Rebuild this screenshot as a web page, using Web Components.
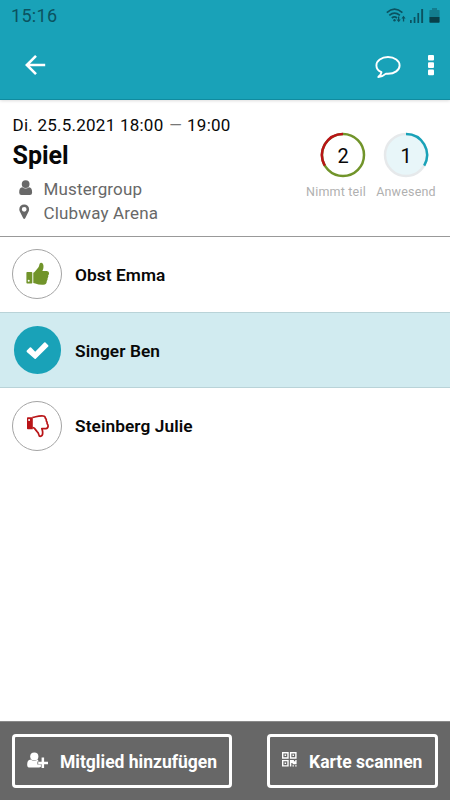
<!DOCTYPE html>
<html lang="de">
<head>
<meta charset="utf-8">
<title>Spiel</title>
<style>
html,body{margin:0;height:100%;background:#fff;overflow:hidden}
body{font-family:Roboto,"Noto Sans",sans-serif;color:#080808}
</style>
</head>
<body>
<club-app></club-app>
<script>
const ICONS = {
  wifi: [20,16,'<g fill="none" stroke="currentColor" stroke-width="1.7"><path d="M.8 4.6Q8.5-2.2 16.4 4.6"/><path d="M3.3 7.4Q8.5 2.9 13.9 7.4"/><path d="M5.8 10Q8.4 7.8 11 10"/></g><circle cx="8.5" cy="12.2" r="1.2" fill="currentColor"/><path d="M12 8.600h1.300v3h1.500l-2.100 2.600-2.200-2.600h1.500zM16.900 13.600h1.300v-3.200h1.400l-2.100-2.600-2.100 2.600h1.500z" fill="currentColor"/>'],
  signal: [14,15,'<g fill="currentColor"><rect x="0" y="11" width="1.700" height="3"/><rect x="3.700" y="8" width="1.700" height="6"/><rect x="7.400" y="4" width="1.700" height="10"/><rect x="11.200" y="0" width="1.900" height="14"/></g>'],
  battery: [11,16,'<path d="M3 0h5v2h2q.6 0 .6.7V9H.4V2.700Q.4 2 1 2h2z" fill="#137d8f"/><path d="M.4 9h10.200v5q0 .8-.8.8H1.200Q.4 14.800.4 14z" fill="#083f49"/>'],
  back: [22,22,'<path d="M11 1.800L1.800 11l9.200 9.200M1.800 11h18.400" fill="none" stroke="#fff" stroke-width="2.600"/>'],
  comment: [26,24,'<path d="M6.500 17.200C3 15.700 1.400 13.200 1.400 10.400 1.400 5.600 6.500 2 13 2s11.600 3.600 11.600 8.400S19.500 18.700 13 18.700q-1 0-2-.1Q7.500 21.800 3.300 22q2.900-2.100 3.200-4.800z" fill="none" stroke="#fff" stroke-width="1.900" stroke-linejoin="round"/>'],
  more: [6,21,'<g fill="#fff"><rect width="6" height="5.600" rx="1"/><rect y="7.300" width="6" height="5.600" rx="1"/><rect y="14.600" width="6" height="5.600" rx="1"/></g>'],
  user: [14,16,'<path d="M3.300 7.200Q0 7.500.2 12.700.3 15.100 2.400 15.100h8.500q2.100 0 2.200-2.400.2-5.200-3.100-5.500Q6.700 9.700 3.300 7.200z" fill="currentColor"/><circle cx="6.650" cy="4.100" r="3.900" fill="currentColor"/>'],
  pin: [14,16,'<path fill-rule="evenodd" d="M5.200.4a4.900 4.900 0 0 1 4.900 4.900q0 1.100-.4 2L6.200 14.300q-1 1.200-2 0L.7 7.300q-.4-.9-.4-2A4.900 4.900 0 0 1 5.200.4zm0 2.500a2.400 2.400 0 1 0 0 4.800 2.400 2.400 0 0 0 0-4.800z" fill="currentColor"/>'],
  up: [24,24,'<path fill="#71942a" fill-rule="evenodd" d="M1.200 10h4.300q.8 0 .8.800v10q0 .8-.8.800H1.200q-.8 0-.8-.8v-10q0-.8.800-.8zm1.500 7.800a1 1 0 1 0 0 2 1 1 0 0 0 0-2zM7.300 10.800q1-.2 1.900-1.500l3.100-3.900q.8-1 1.100-2.900.3-1.800 1.600-1.800 2.700.2 2.500 4.300 0 1.500-1.100 4h4.500q2.200.2 2.200 2.300 0 1.400-.9 2 .5 1.700-.6 2.900.2 1.700-.8 2.700.1 3.700-3.500 3.800-4.600.2-8-1.200-1.200-.4-2-.4z"/>'],
  down: [24,24,'<path fill="#b91417" fill-rule="evenodd" d="M1.800 3.300h5v12h-5q-.8 0-.8-.8v-10.400q0-.8.800-.8zm1.300 1.600a1 1 0 1 0 0 2 1 1 0 0 0 0-2z"/><path d="M6.500 3.400C10 3 11.500 1.700 17.200 2q2.200.2 2.200 2.300 1.300.9.900 2.600 1.200 1.200.8 2.800 1 1 1 2.400-.1 2.300-2.300 2.500h-4q.9 2 .9 4.500 0 3.200-2.500 3.300-1.100 0-1.400-1.800-.3-1.700-1.700-3l-2.600-3.200q-.8-.9-2-.9" fill="none" stroke="#b91417" stroke-width="1.700" stroke-linejoin="round"/>'],
  check: [24,20,'<path d="M.8 10.600l3-3q.7-.6 1.300 0L9.200 11.700 18.200 2.600q.7-.6 1.300 0l2.700 2.700q.6.700 0 1.300L9.800 18.800q-.6.600-1.200 0L.8 11.900q-.5-.7 0-1.300z" fill="#fff"/>'],
  add: [22,17,'<g fill="#fff"><circle cx="7.300" cy="4.500" r="4.100"/><path d="M3.500 7.600Q.1 7.900.2 12.900.3 15.600 2.700 15.600h9.200q1.300 0 2-.8v-2.300h-3.500V9.400h1.200Q11 7.700 10.700 7.600 7.200 10.200 3.500 7.600z"/><path d="M14.600 5.600h2.500v4.100H21v2.500h-3.900V16h-2.500v-3.800H11.200V9.700h3.400z"/></g>'],
  qr: [15,15,'<path fill="#fff" fill-rule="evenodd" d="M0 0h6.700v6.700H0zM1.400 1.400v3.900h3.900V1.400zM7.900 0h6.700v6.700H7.900zm1.400 1.400v3.900h3.900V1.400zM0 7.900h6.700v6.700H0zm1.400 1.400v3.900h3.900V9.300zM2.600 2.600h1.500v1.500H2.600zM10.500 2.600H12v1.500h-1.500zM2.600 10.500h1.500V12H2.600zM7.900 7.900h4v1.300h1.400V7.900h1.300v4.300h-4v-1.300H9.300v3.700H7.900zM10.500 13.300h1.400v1.300h-1.400zM13.200 13.300h1.400v1.300h-1.400z"/>']
};

const define = (name, render) => customElements.define(name, class extends HTMLElement {
  connectedCallback() {
    if (this.shadowRoot) return;
    this.attachShadow({mode: 'open'}).innerHTML = render(this);
  }
});

define('club-icon', el => {
  const [w, h, art] = ICONS[el.getAttribute('name')];
  return `<style>:host{display:block;flex:none;width:${w}px;height:${h}px}svg{display:block}</style>
  <svg width="${w}" height="${h}" viewBox="0 0 ${w} ${h}">${art}</svg>`;
});

define('status-bar', () => `<style>
  :host{display:flex;height:32px;box-sizing:border-box;padding:0 10px 0 11px;color:#0b5260}
  time{font-size:18px;line-height:31px;letter-spacing:.3px;flex:1}
  div{display:flex;align-items:flex-start;padding-top:7.500px}
  .s{margin:1px 5.500px 0 3.500px}
  </style><time>15:16</time><div><club-icon name="wifi"></club-icon><club-icon class="s" name="signal"></club-icon><club-icon name="battery"></club-icon></div>`);

define('app-bar', () => `<style>
  :host{display:flex;flex-direction:column;height:100px;box-sizing:border-box;background:#19a2b8;border-bottom:1px solid #108b9f;box-shadow:0 1px 3px #0002}
  nav{display:flex;align-items:flex-start;padding:22px 16px 0 25px}
  .c{margin:1px 27px 0 auto}
  .o{margin-top:1px}
  </style><status-bar></status-bar><nav><club-icon name="back"></club-icon><club-icon class="c" name="comment"></club-icon><club-icon class="o" name="more"></club-icon></nav>`);

define('count-ring', el => `<style>
  :host{display:flex;flex-direction:column;align-items:center;width:70px}
  .ring{display:grid;place-items:center;width:46px;height:46px;margin-left:var(--ring-shift,0)}
  .ring>*{grid-area:1/1}
  b{font-weight:400;font-size:20px;line-height:24px;padding-top:1px}
  span{font-size:12.500px;line-height:16px;color:#b0b0b0;letter-spacing:.2px;margin-top:6px;white-space:nowrap}
  </style><div class="ring"><svg width="46" height="46" viewBox="-23 -23 46 46"><g fill="none" stroke-width="2.500">
  <circle r="21" fill="${el.getAttribute('fill')}" stroke="${el.getAttribute('base')}"/>
  <path d="${el.getAttribute('arc')}" stroke="${el.getAttribute('accent')}"/></g></svg><b>${el.getAttribute('value')}</b></div><span><slot></slot></span>`);

define('meta-line', el => `<style>
  :host{display:flex;align-items:center;height:24px;padding-left:6px;color:#686868}
  span{font-size:17px;letter-spacing:.16px;margin-left:11px;padding-top:1px}
  </style><club-icon name="${el.getAttribute('icon')}"></club-icon><span><slot></slot></span>`);

define('event-summary', () => `<style>
  :host{display:flex;justify-content:space-between;height:137px;box-sizing:border-box;padding:14px 9px 0 12.500px;border-bottom:1px solid #999}
  .d{font-size:17px;line-height:22px;letter-spacing:.24px;white-space:nowrap}
  i{font-style:normal;color:#777;display:inline-block;transform:scaleX(.95);margin:0 .6px}
  h1{font-size:25px;line-height:30px;margin:5px 0 5px;font-weight:700}
  .r{display:flex;padding-top:18px}
  .r>:first-child{--ring-shift:14px}
  </style><div><div class="d">Di. 25.5.2021 18:00 <i>—</i> 19:00</div><h1>Spiel</h1>
  <meta-line icon="user">Mustergroup</meta-line><meta-line icon="pin">Clubway Arena</meta-line></div>
  <div class="r"><count-ring value="2" fill="#fff" base="#71942a" accent="#b91417" arc="M-18.190 10.500A21 21 0 0 1 0-21">Nimmt teil</count-ring>
  <count-ring value="1" fill="#e8f6f9" base="#e6e9eb" accent="#19a2b8" arc="M0-21A21 21 0 0 1 18.190 10.500">Anwesend</count-ring></div>`);

define('member-row', el => `<style>
  :host{display:flex;align-items:center;height:75px;padding-left:12px;gap:12px}
  :host([state=check]){background:#d1ebf0;border-top:1px solid #b9d3d8;border-bottom:1px solid #b9d3d8;height:74px}
  .a{width:51px;height:50px;box-sizing:border-box;display:grid;place-items:center;position:relative}
  .a::before{content:"";grid-area:1/1;box-sizing:border-box;width:50px;height:50px;border-radius:50%;border:1px solid #a4a4a4}
  .a club-icon{grid-area:1/1}
  :host([state=check]) .a::before{width:47.500px;height:47.500px;border:0;background:#19a2b8}
  :host(:not([state=check])) .a{justify-items:start}
  :host(:not([state=check])) club-icon{margin-left:13.500px}
  :host([state=up]) .a{margin-bottom:2px}
  :host([state=up]) club-icon{margin-top:1px}
  span{font-size:17.300px;font-weight:600;letter-spacing:.08px;padding-top:1px}
  </style><div class="a"><club-icon name="${el.getAttribute('state')}"></club-icon></div><span><slot></slot></span>`);

define('action-button', el => `<style>
  :host{display:block}
  button{all:unset;box-sizing:border-box;display:flex;align-items:center;width:100%;height:54px;border:3px solid #fff;border-radius:4px;color:#fff;padding-left:12px;font:700 17.500px Roboto,sans-serif;white-space:nowrap}
  club-icon{margin-top:-1px}
  span{margin-left:11px;padding-top:2px}
  :host([icon=qr]) span{margin-left:12px}
  :host([icon=qr]) club-icon{margin-top:-3px}
  </style><button><club-icon name="${el.getAttribute('icon')}"></club-icon><span><slot></slot></span></button>`);

define('club-app', () => `<style>
  :host{display:flex;flex-direction:column;width:450px;height:800px;background:#fff}
  main{flex:1}
  footer{display:flex;justify-content:space-between;height:79px;box-sizing:border-box;padding:12px 12px 0;background:#676767;border-top:1px solid #8a8a8a}
  .m{width:220px}.k{width:171px}
  </style><app-bar></app-bar><event-summary></event-summary>
  <main><member-row state="up">Obst Emma</member-row><member-row state="check">Singer Ben</member-row><member-row state="down">Steinberg Julie</member-row></main>
  <footer><action-button class="m" icon="add">Mitglied hinzufügen</action-button><action-button class="k" icon="qr">Karte scannen</action-button></footer>`);
</script>
</body>
</html>
